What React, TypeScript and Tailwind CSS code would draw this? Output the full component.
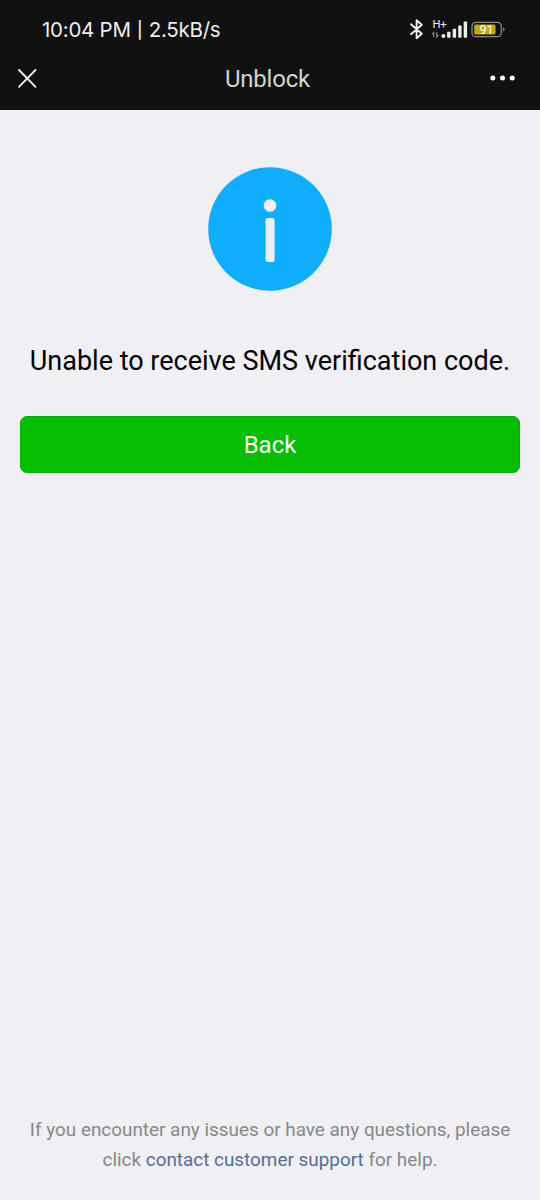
import React from "react";

function StatusBar() {
  return (
    <div className="flex h-[57px] items-start justify-between pt-[15px] pr-[35px] pl-[42px] text-[#ededed]">
      <div className="flex items-center font-[Inter,sans-serif] text-[20.5px] leading-[30px] tracking-[-0.25px] whitespace-nowrap">
        <span>10:04 PM</span>
        <span className="w-[18px] text-center text-[16.5px] font-medium">|</span>
        <span>2.5kB/s</span>
      </div>
      <svg className="h-[30px] w-[96px]" viewBox="409 15 96 30" fill="none" aria-label="Bluetooth, H+ signal, battery">
        <path d="M411 24.2 421.8 33.7 416.6 38.2V20.2L421.8 24.7 411 34.2" stroke="#f0f0f0" strokeWidth="1.9" strokeLinejoin="round" strokeLinecap="round" />
        <text x="432.4" y="27.6" fontSize="11.2" fill="#ececec" fontFamily="Roboto, sans-serif">H+</text>
        <path d="M433.7 37.2v-4.7l-1.6 1.8M436.8 32.2v4.7l1.6-1.8" stroke="#8a8a8a" strokeWidth="1.2" />
        <g fill="#ededed">
          <rect x="441.6" y="34.2" width="3.6" height="3.6" rx=".8" />
          <rect x="447.1" y="31.8" width="3.4" height="6" rx=".7" />
          <rect x="452.7" y="28.8" width="3.4" height="9" rx=".7" />
          <rect x="458.2" y="25.4" width="3.4" height="12.4" rx=".7" />
          <rect x="463.7" y="21.6" width="3.4" height="16.2" rx=".7" />
        </g>
        <rect x="472" y="22.3" width="29.3" height="14.4" rx="4" stroke="#8c8c8c" strokeWidth="1.3" />
        <rect x="474.2" y="24.4" width="21.3" height="10.2" rx="1.5" fill="#c0a810" />
        <path d="M503.2 27.2q1.3.4 1.3 2.2t-1.3 2.2z" fill="#999" />
        <text x="486.5" y="33.9" fontSize="12.5" fill="#fff" textAnchor="middle" fontFamily="Roboto, sans-serif">91</text>
      </svg>
    </div>
  );
}

function TitleBar() {
  return (
    <div className="grid h-[53px] grid-cols-[1fr_auto_1fr] items-start pr-[25px] pl-[18px]">
      <button className="mt-[12px] h-[19px] w-[19px]" aria-label="Close">
        <svg viewBox="0 0 19 19" fill="none" stroke="#f2f2f2" strokeWidth="1.8" strokeLinecap="round">
          <path d="M1 1 17.5 17.8M17.5 1 1 17.8" />
        </svg>
      </button>
      <h1 className="mt-[7px] ml-[2px] text-[24px] leading-[30px] tracking-[-0.2px] text-[#d3d3d3]">Unblock</h1>
      <button className="mt-[18px] h-[6px] w-[25px] justify-self-end" aria-label="More">
        <svg viewBox="0 0 25 6" fill="#fff">
          <circle cx="2.8" cy="3" r="2.5" />
          <circle cx="12.5" cy="3" r="2.5" />
          <circle cx="22.2" cy="3" r="2.5" />
        </svg>
      </button>
    </div>
  );
}

export default function App() {
  return (
    <div className="flex h-[1200px] w-[540px] flex-col overflow-hidden bg-[#efeff4] font-[Roboto,sans-serif]">
      <header className="h-[110px] shrink-0 bg-[#111111]">
        <StatusBar />
        <TitleBar />
      </header>
      <main className="flex flex-1 flex-col items-center px-5 pt-[57px]">
        <svg className="h-[124px] w-[124px]" viewBox="0 0 124 124" aria-label="Information">
          <circle cx="62" cy="62" r="61.8" fill="#10aeff" />
          <circle cx="62" cy="38.5" r="6.3" fill="#efeff4" />
          <rect x="57.6" y="51" width="9" height="44" rx="2" fill="#efeff4" />
        </svg>
        <p className="mt-[50px] text-[27px] leading-[40px] whitespace-nowrap text-black">Unable to receive SMS verification code.</p>
        <button className="mt-[35px] h-[57px] w-full rounded-[7px] border border-[#05ad05] bg-[#04be02] text-[24px] text-white">Back</button>
      </main>
      <footer className="pb-[25px] text-center text-[18.9px] leading-[30px] whitespace-nowrap text-[#888888]">
        <p>If you encounter any issues or have any questions, please</p>
        <p>click <a className="text-[#586c94]">contact customer support</a> for help.</p>
      </footer>
    </div>
  );
}
